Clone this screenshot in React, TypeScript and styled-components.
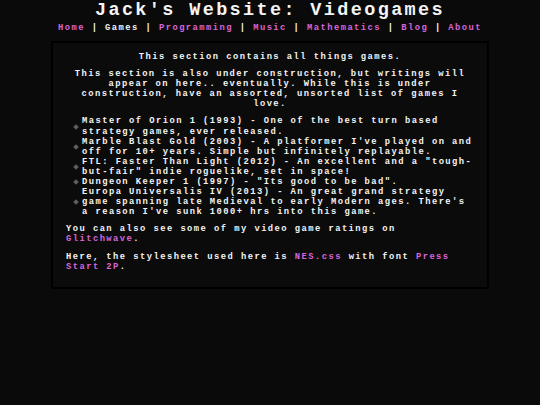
import React from "react";
import styled, { createGlobalStyle } from "styled-components";

const Global = createGlobalStyle`
  html, body {
    margin: 0;
    padding: 0;
    background: #0a0a0a;
  }
  body {
    font-family: "Liberation Mono", "DejaVu Sans Mono", monospace;
    color: #f4f4f4;
  }
`;

const Page = styled.div`
  display: flex;
  flex-direction: column;
  align-items: center;
  min-height: 405px;
  background: #0a0a0a;
`;

const Title = styled.h1`
  margin: 0;
  font-size: 18.5px;
  line-height: 21px;
  font-weight: 700;
  letter-spacing: 2.36px;
  color: #f4f4f4;
  text-align: center;
`;

const Nav = styled.nav`
  margin-top: 2.3px;
  font-size: 8.8px;
  line-height: 10.1px;
  font-weight: 700;
  letter-spacing: 1.45px;
  white-space: pre;
  color: #f4f4f4;
`;

const NavLink = styled.a<{ $current?: boolean }>`
  color: ${(p) => (p.$current ? "#f4f4f4" : "#d965d9")};
  text-decoration: none;
`;

const Container = styled.main`
  margin-top: 7.6px;
  width: 408px;
  padding: 9px 13px 8px;
  border: 2px solid #000;
  background: #0b0b0b;
  font-size: 8.8px;
  line-height: 10.1px;
  font-weight: 700;
  letter-spacing: 1.45px;
`;

const Para = styled.p<{ $center?: boolean }>`
  margin: 0 0 7px;
  text-align: ${(p) => (p.$center ? "center" : "left")};
`;

const List = styled.ul`
  margin: 0 0 7px;
  padding: 0 0 0 16px;
  list-style: none;
`;

const Item = styled.li`
  position: relative;
  &::before {
    content: "";
    position: absolute;
    left: -8px;
    top: 50%;
    width: 4px;
    height: 4px;
    margin-top: -2px;
    background: #5e5e5e;
    transform: rotate(45deg);
  }
`;

const Link = styled.a`
  color: #d965d9;
  text-decoration: none;
`;

const navItems = [
  { label: "Home" },
  { label: "Games", current: true },
  { label: "Programming" },
  { label: "Music" },
  { label: "Mathematics" },
  { label: "Blog" },
  { label: "About" },
];

const games = [
  "Master of Orion 1 (1993) - One of the best turn based strategy games, ever released.",
  "Marble Blast Gold (2003) - A platformer I've played on and off for 10+ years. Simple but infinitely replayable.",
  'FTL: Faster Than Light (2012) - An excellent and a "tough-but-fair" indie roguelike, set in space!',
  'Dungeon Keeper 1 (1997) - "Its good to be bad".',
  "Europa Universalis IV (2013) - An great grand strategy game spanning late Medieval to early Modern ages. There's a reason I've sunk 1000+ hrs into this game.",
];

export default function App() {
  return (
    <>
      <Global />
      <Page>
        <Title>Jack's Website: Videogames</Title>
        <Nav>
          {navItems.map((n, i) => (
            <React.Fragment key={n.label}>
              {i > 0 && " | "}
              <NavLink href="#" $current={n.current}>
                {n.label}
              </NavLink>
            </React.Fragment>
          ))}
        </Nav>
        <Container>
          <Para $center>This section contains all things games.</Para>
          <Para $center>
            This section is also under construction, but writings will appear on
            here.. eventually. While this is under construction, have an assorted,
            unsorted list of games I love.
          </Para>
          <List>
            {games.map((g) => (
              <Item key={g}>{g}</Item>
            ))}
          </List>
          <Para>
            You can also see some of my video game ratings on{" "}
            <Link href="#">Glitchwave</Link>.
          </Para>
          <Para>
            Here, the stylesheet used here is <Link href="#">NES.css</Link> with
            font <Link href="#">Press Start 2P</Link>.
          </Para>
        </Container>
      </Page>
    </>
  );
}
